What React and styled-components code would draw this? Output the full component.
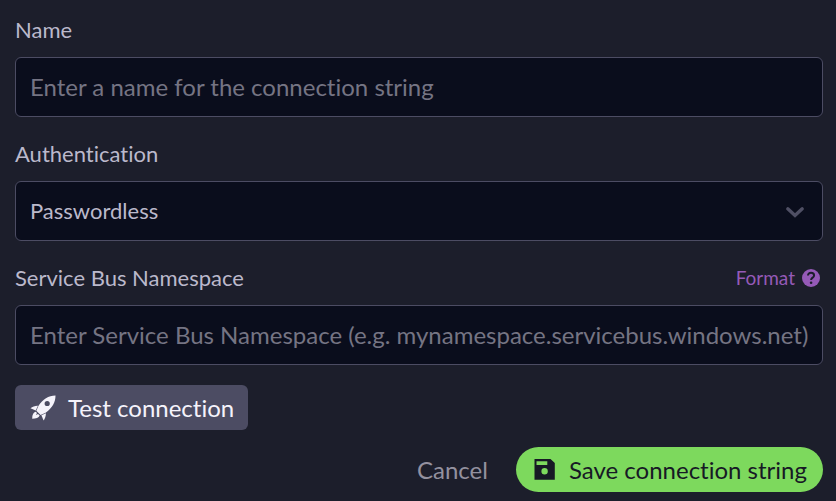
import React from "react";
import styled, { createGlobalStyle } from "styled-components";

const GlobalStyle = createGlobalStyle`
  *, *::before, *::after { box-sizing: border-box; }
  body {
    margin: 0;
    background: #1c1e2b;
    color: #bbb9cb;
    font-family: Lato, "Liberation Sans", sans-serif;
    font-variant-ligatures: none;
  }
  button, input, select { font-family: inherit; font-variant-ligatures: inherit; }
`;

const Form = styled.form`
  display: flex;
  flex-direction: column;
  padding: 16px 13px 9px 15px;
`;

const Field = styled.div`
  display: flex;
  flex-direction: column;
  gap: 13px;
  margin-bottom: ${(p) => (p.$last ? "20px" : "23px")};
`;

const LabelRow = styled.div`
  display: flex;
  align-items: center;
  justify-content: space-between;
  height: 28px;
`;

const Label = styled.label`
  font-size: 22px;
  line-height: 28px;
`;

const FormatLink = styled.a`
  display: flex;
  align-items: center;
  gap: 7px;
  padding-right: 3px;
  color: #955ab7;
  font-size: 19px;
  line-height: 28px;
  text-decoration: none;
`;

const TextInput = styled.input`
  width: 100%;
  height: 60px;
  padding: 0 14px 2px;
  border: 1px solid #4c4c63;
  border-radius: 6px;
  background: #0a0d1c;
  color: #bbb9cb;
  font-size: 24px;
  outline: none;
  &::placeholder { color: #757483; opacity: 1; }
`;

const SelectBox = styled.div`
  position: relative;
  display: grid;
`;

const Select = styled.select`
  width: 100%;
  height: 60px;
  padding: 0 48px 2px 14px;
  border: 1px solid #4c4c63;
  border-radius: 6px;
  appearance: none;
  background: #0a0d1c;
  color: #bbb9cb;
  font-size: 22px;
  outline: none;
`;

const Chevron = styled.svg`
  position: absolute;
  right: 18px;
  top: 24px;
  pointer-events: none;
`;

const Button = styled.button`
  display: inline-flex;
  align-items: center;
  height: 45px;
  border: 0;
  font-size: 24px;
  line-height: 32px;
  white-space: nowrap;
  cursor: pointer;
`;

const TestButton = styled(Button)`
  align-self: flex-start;
  gap: 12px;
  padding: 0 14px 0 15px;
  border-radius: 6px;
  background: #4c4c63;
  color: #f5f3fb;
`;

const CancelButton = styled(Button)`
  padding: 0;
  background: transparent;
  color: #93919f;
`;

const SaveButton = styled(Button)`
  gap: 14px;
  padding: 0 16px 0 18px;
  border-radius: 23px;
  background: #7dd95d;
  color: #171925;
`;

const Footer = styled.div`
  display: flex;
  justify-content: flex-end;
  gap: 28px;
  margin-top: 17px;
`;

function RocketIcon() {
  return (
    <svg width="26" height="26" viewBox="0 0 26 26" fill="currentColor" aria-hidden="true">
      <path
        fillRule="evenodd"
        d="M25.500 0.500C18.500 0.700 12.800 4.200 8.500 10.800L6.300 15.800L10.600 20L15.600 17.800C22.200 13 25.500 7.500 25.500 0.500ZM17.200 5.900A2.600 2.600 0 1 1 17.200 11.100A2.600 2.600 0 0 1 17.200 5.900Z"
      />
      <path d="M8 10.800C5 10.700 2.500 11.600 0.500 13.300L5.700 15.400Z" />
      <path d="M16 18.200C15.800 21 15 23.400 13.600 25.600L11.400 20.200Z" />
      <path d="M5.700 16.800C3.400 17.600 2.100 19.800 2.200 23.700C6 23.700 8.800 22.800 9.700 20.600L8 19L5.900 20.100L7 18Z" />
    </svg>
  );
}

function SaveIcon() {
  return (
    <svg width="21" height="21" viewBox="0 0 21 21" fill="currentColor" aria-hidden="true">
      <path
        fillRule="evenodd"
        d="M0.500 0H16.500L20.800 4V20.800H0.500ZM2.500 2.300V5.900H13.300V2.300ZM10.600 9A3.200 3.200 0 1 0 10.600 15.400A3.200 3.200 0 0 0 10.600 9Z"
      />
    </svg>
  );
}

function HelpIcon() {
  return (
    <svg width="18" height="18" viewBox="0 0 18 18" fill="none" aria-hidden="true">
      <circle cx="9" cy="9" r="9" fill="currentColor" />
      <path
        d="M6 6.600C6 4.800 7.300 3.800 9 3.800C10.800 3.800 12.100 4.800 12.100 6.400C12.100 8.600 9.100 8.700 9.100 11"
        stroke="#1c1e2b"
        strokeWidth="2"
      />
      <circle cx="9.100" cy="13.700" r="1.300" fill="#1c1e2b" />
    </svg>
  );
}

export default function App() {
  return (
    <>
      <GlobalStyle />
      <Form onSubmit={(e) => e.preventDefault()}>
        <Field>
          <LabelRow>
            <Label htmlFor="name">Name</Label>
          </LabelRow>
          <TextInput id="name" type="text" placeholder="Enter a name for the connection string" />
        </Field>
        <Field>
          <LabelRow>
            <Label htmlFor="authentication">Authentication</Label>
          </LabelRow>
          <SelectBox>
            <Select id="authentication" defaultValue="passwordless">
              <option value="passwordless">Passwordless</option>
            </Select>
            <Chevron width="20" height="14" viewBox="0 0 20 14" fill="none" aria-hidden="true">
              <path d="M2.800 3.800L10 10.500L17.200 3.800" stroke="#4f4f64" strokeWidth="3.400" strokeLinecap="round" />
            </Chevron>
          </SelectBox>
        </Field>
        <Field $last>
          <LabelRow>
            <Label htmlFor="namespace">Service Bus Namespace</Label>
            <FormatLink href="#format">
              Format
              <HelpIcon />
            </FormatLink>
          </LabelRow>
          <TextInput
            id="namespace"
            type="text"
            placeholder="Enter Service Bus Namespace (e.g. mynamespace.servicebus.windows.net)"
          />
        </Field>
        <TestButton type="button">
          <RocketIcon />
          Test connection
        </TestButton>
        <Footer>
          <CancelButton type="button">Cancel</CancelButton>
          <SaveButton type="submit">
            <SaveIcon />
            Save connection string
          </SaveButton>
        </Footer>
      </Form>
    </>
  );
}
